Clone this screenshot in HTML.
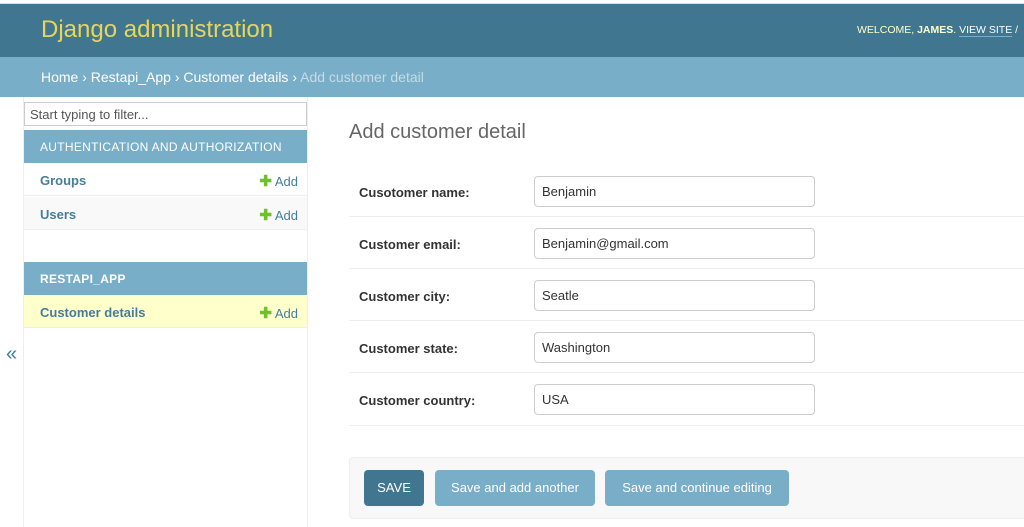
<!DOCTYPE html>
<html><head><meta charset="utf-8"><style>
*{box-sizing:border-box;margin:0;padding:0}
body{width:1024px;height:527px;overflow:hidden;background:#fff;font-family:"Liberation Sans",sans-serif;position:relative;color:#333}
.a{position:absolute}
#hdr{left:0;top:3px;width:1024px;height:54px;background:#417690;border-top:1px solid #ddd}
#bc{left:0;top:57px;width:1024px;height:40px;background:#79aec8;color:#fff;font-size:14px;padding:12px 41px}
.lab{left:359px;font-size:13px;font-weight:bold;color:#333}
.inp{left:534px;width:281px;height:31px;border:1px solid #ccc;border-radius:4px;font-size:13px;padding:7px 7px;color:#333}
.hr{left:349px;width:675px;height:1px;background:#eee}
.btn{top:470px;height:36px;border-radius:4px;background:#79aec8;color:#fff;font-size:13px;text-align:center;line-height:36px}
.row{left:24px;width:283px;height:33px;border-bottom:1px solid #eee;font-size:13px;font-weight:bold;color:#447e9b;padding:10px 16px}
.add{position:absolute;right:9px;top:9px;font-weight:normal;color:#447e9b}
.add b{color:#70bf2b;font-size:15px}
.sh{left:24px;width:283px;height:33px;background:#79aec8;color:#fff;font-size:12px;padding:10px 16px;letter-spacing:.3px}
</style></head><body>
<div class="a" style="left:0;top:0;width:1024px;height:3px;background:#fff"></div>
<div class="a" id="hdr">
<div class="a" style="left:41px;top:12px;font-size:24px;color:#e8d55a">Django administration</div>
<div class="a" style="left:857px;top:20px;font-size:10.5px;color:#ffc;white-space:nowrap">WELCOME, <b>JAMES</b>. <span style="border-bottom:1px solid #79aec8;color:#fff">VIEW SITE</span> /</div>
</div>
<div class="a" id="bc">Home › Restapi_App › Customer details › <span style="color:#c4dce8">Add customer detail</span></div>
<div class="a" style="left:307px;top:97px;width:1px;height:430px;background:#eee"></div>
<div class="a" style="left:23px;top:97px;width:1px;height:430px;background:#eee"></div>
<div class="a" style="left:24px;top:102px;width:283px;height:24px;border:1px solid #ccc;font-size:13px;color:#555;padding:4px 5px">Start typing to filter...</div>
<div class="a sh" style="top:130px">AUTHENTICATION AND AUTHORIZATION</div>
<div class="a row" style="top:163px">Groups<span class="add"><b>✚</b> Add</span></div>
<div class="a row" style="top:197px;background:#f9f9f9">Users<span class="add"><b>✚</b> Add</span></div>
<div class="a sh" style="top:262px;font-weight:bold">RESTAPI_APP</div>
<div class="a row" style="top:295px;background:#ffc">Customer details<span class="add"><b>✚</b> Add</span></div>
<div class="a" style="left:6px;top:343px;font-size:20px;color:#447e9b">«</div>
<div class="a" style="left:349px;top:121px;font-size:20px;color:#666">Add customer detail</div>
<div class="a lab" style="top:185px">Cusotomer name:</div><div class="a inp" style="top:176px">Benjamin</div><div class="a hr" style="top:216px"></div>
<div class="a lab" style="top:237px">Customer email:</div><div class="a inp" style="top:228px">Benjamin@gmail.com</div><div class="a hr" style="top:268px"></div>
<div class="a lab" style="top:289px">Customer city:</div><div class="a inp" style="top:280px">Seatle</div><div class="a hr" style="top:320px"></div>
<div class="a lab" style="top:341px">Customer state:</div><div class="a inp" style="top:332px">Washington</div><div class="a hr" style="top:372px"></div>
<div class="a lab" style="top:393px">Customer country:</div><div class="a inp" style="top:384px">USA</div><div class="a hr" style="top:425px"></div>
<div class="a" style="left:349px;top:457px;width:680px;height:62px;background:#f8f8f8;border:1px solid #eee;border-radius:4px"></div>
<div class="a btn" style="left:364px;width:60px;background:#417690">SAVE</div>
<div class="a btn" style="left:435px;width:160px">Save and add another</div>
<div class="a btn" style="left:605px;width:184px">Save and continue editing</div>
</body></html>
